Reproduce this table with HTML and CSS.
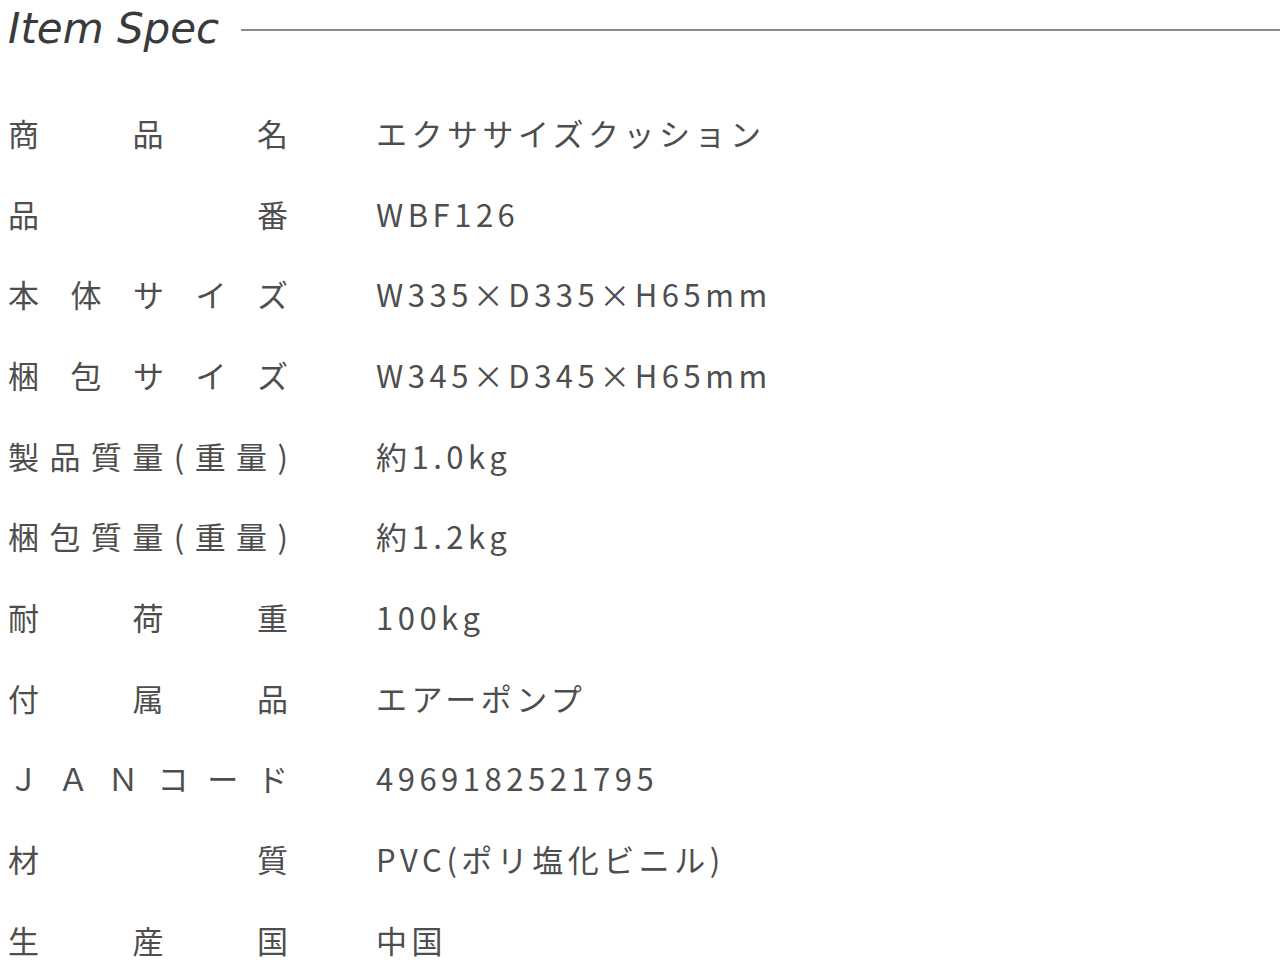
FILE: index.html
```html
<!DOCTYPE html>
<html lang="ja">
<head>
<meta charset="UTF-8">
<meta name="viewport" content="width=device-width, initial-scale=1.0">
<title>Item Spec</title>
<link rel="stylesheet" href="styles.css">
</head>
<body>

<div class="spec">
  <div class="spec-head">
    <h2>Item Spec</h2>
    <div class="rule"></div>
  </div>

  <dl class="spec-list">
    <dt>商品名</dt>
    <dd>エクササイズクッション</dd>
    <dt>品　番</dt>
    <dd>WBF126</dd>
    <dt>本体サイズ</dt>
    <dd>W335×D335×H65mm</dd>
    <dt>梱包サイズ</dt>
    <dd>W345×D345×H65mm</dd>
    <dt>製品質量(重量)</dt>
    <dd>約1.0kg</dd>
    <dt>梱包質量(重量)</dt>
    <dd>約1.2kg</dd>
    <dt>耐荷重</dt>
    <dd>100kg</dd>
    <dt>付属品</dt>
    <dd>エアーポンプ</dd>
    <dt>ＪＡＮコード</dt>
    <dd>4969182521795</dd>
    <dt>材　質</dt>
    <dd>PVC(ポリ塩化ビニル)</dd>
    <dt>生産国</dt>
    <dd>中国</dd>
  </dl>
</div>

</body>
</html>
```

FILE: styles.css
```css
body {
  margin: 0;
  padding: 0 0 0 8px;
  background-color: #fff;
  color: #4e4e4e;
  font-family: "Noto Sans CJK JP", "Noto Sans", sans-serif;
}
.spec-head {
  display: flex;
  align-items: center;
  height: 60px;
  margin-bottom: 32px;
}
.spec-head h2 {
  margin: -4px 0 0 0;
  font-family: "DejaVu Sans", sans-serif;
  font-style: italic;
  font-weight: 200;
  font-size: 42px;
  color: #3a3a3a;
}
.rule {
  flex: 1;
  height: 2px;
  margin-left: 22px;
  background-color: #8a8a8a;
}
.spec-list {
  display: grid;
  grid-template-columns: 280px auto;
  grid-auto-rows: 80.7px;
  column-gap: 88px;
  align-items: center;
  margin: 0;
  font-size: 31px;
}
.spec-list dt {
  text-align: justify;
  text-align-last: justify;
}
.spec-list dd {
  margin: 0;
  letter-spacing: 4.5px;
}
```
